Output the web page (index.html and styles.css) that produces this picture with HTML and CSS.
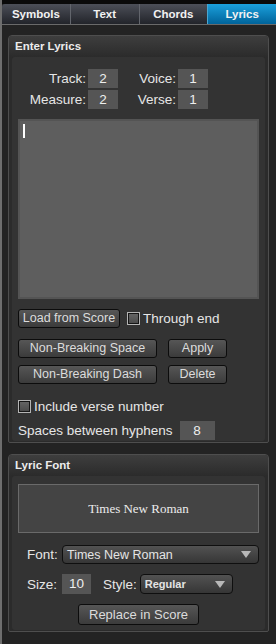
FILE: index.html
```html
<!DOCTYPE html>
<html>
<head>
    <title>Lyrics</title>
    <link rel="stylesheet" href="styles.css">
</head>
<body>
    <div class="topstrip"></div>
    <div class="tabs">
        <div class="tab">Symbols</div>
        <div class="tab">Text</div>
        <div class="tab">Chords</div>
        <div class="tab on">Lyrics</div>
    </div>

    <!-- Enter Lyrics -->
    <div class="group">
        <div class="group-title">Enter Lyrics</div>
        <div class="group-body">
            <div class="pos">
                <span class="lbl">Track:</span><span class="field">2</span>
                <span class="lbl">Voice:</span><span class="field">1</span>
                <span class="lbl">Measure:</span><span class="field">2</span>
                <span class="lbl">Verse:</span><span class="field">1</span>
            </div>
            <div class="lyrics-box"><span class="caret"></span></div>
            <div class="row row-load">
                <div class="btn w-load">Load from Score</div>
                <span class="check"></span><span class="txt">Through end</span>
            </div>
            <div class="row row-nbs">
                <div class="btn w-nb">Non-Breaking Space</div>
                <div class="btn w-ap">Apply</div>
            </div>
            <div class="row row-nbd">
                <div class="btn w-nb">Non-Breaking Dash</div>
                <div class="btn w-ap">Delete</div>
            </div>
            <div class="row row-inc">
                <span class="check first"></span><span class="txt">Include verse number</span>
            </div>
            <div class="row row-hyph">
                <span class="txt">Spaces between hyphens</span>
                <span class="field w-hyph">8</span>
            </div>
        </div>
    </div>

    <!-- Lyric Font -->
    <div class="group">
        <div class="group-title">Lyric Font</div>
        <div class="group-body body-font">
            <div class="preview">Times New Roman</div>
            <div class="row row-font">
                <span class="txt lbl-font">Font:</span>
                <div class="select w-font"><span>Times New Roman</span><i class="arrow"></i></div>
            </div>
            <div class="row row-size">
                <span class="txt lbl-font">Size:</span>
                <span class="field w-size">10</span>
                <span class="txt lbl-style">Style:</span>
                <div class="select w-style"><span class="bold">Regular</span><i class="arrow"></i></div>
            </div>
            <div class="row row-replace">
                <div class="btn w-rep">Replace in Score</div>
            </div>
        </div>
    </div>
</body>
</html>
```

FILE: styles.css
```css
*{margin:0;padding:0;box-sizing:border-box;}
body{width:276px;height:644px;overflow:hidden;background:#232323;border-left:2px solid #6e6e6e;
    font-family:"Liberation Sans",Arial,sans-serif;color:#e6e6e6;}

.topstrip{height:4px;background:#0a0a0a;}
.tabs{display:flex;height:21px;border-bottom:1px solid #6a6a6a;}
.tab{flex:1;text-align:center;font-size:11.5px;font-weight:bold;line-height:20px;color:#f2f2f2;
    background:linear-gradient(#4c4f58,#22242a);border-left:1px solid #62656c;}
.tab:first-child{border-left:none;border-radius:3px 0 0 0;}
.tab.on{background:linear-gradient(#1ba0dc,#00639a);border-left-color:#4aa6d0;}

.group{margin:10px 7px 0 6px;border:1px solid #4e4e4e;border-radius:4px 4px 2px 2px;background:#2b2b2b;padding:0 3px 1px;}
.group + .group{margin-top:11px;}
.group-title{height:21px;margin:0 -3px;padding-left:6px;font-size:11.5px;font-weight:bold;line-height:20px;
    color:#ececec;background:linear-gradient(#3e3e3e,#2b2b2b);border-radius:3px 3px 0 0;}
.group-body{background:#333;border-radius:3px;padding:12px 6px 1px;}
.body-font{padding:8px 6px 5px;}

.pos{display:grid;grid-template-columns:68px 30px 56px 30px;column-gap:2px;row-gap:2px;}
.lbl{text-align:right;font-size:13.5px;line-height:19px;}
.field{display:block;height:19px;background:#555;text-align:center;font-size:13.5px;line-height:19px;color:#eee;}

.lyrics-box{margin-top:10px;height:180px;background:#5e5e5e;border:2px solid #545454;padding:3px 0 0 3px;}
.caret{display:block;width:2px;height:14px;background:#fff;}

.row{display:flex;align-items:center;}
.row-load{margin-top:10px;}
.row-nbs{margin-top:11px;}
.row-nbd{margin-top:7px;}
.row-inc{margin-top:13px;}
.row-hyph{margin-top:5px;}
.row-font{margin-top:12px;padding-left:9px;}
.row-size{margin-top:10px;padding-left:9px;}
.row-replace{margin-top:10px;justify-content:center;}

.btn{height:19px;border:1px solid #0c0c0c;border-radius:3px;background:linear-gradient(#565656,#3b3b3b);
    color:#dcdcdc;font-size:12.5px;line-height:17px;text-align:center;white-space:nowrap;}
.w-load{width:102px;}
.w-nb{width:139px;}
.w-ap{width:59px;margin-left:11px;}
.w-rep{width:121px;height:21px;line-height:19px;font-size:13px;}

.txt{font-size:13.5px;line-height:19px;white-space:nowrap;}
.check{display:block;width:13px;height:13px;border:1px solid #b4b4b4;background:linear-gradient(#666,#4a4a4a);
    box-shadow:inset 0 0 0 1px #151515;margin:0 3px 0 7px;}
.check.first{margin-left:0;}

.w-hyph{width:35px;margin-left:7px;}

.preview{height:49px;background:#444;border:1px solid #6a6a6a;text-align:center;
    font-family:"Liberation Serif","Times New Roman",serif;font-size:13px;line-height:47px;color:#ececec;}

.lbl-font{width:35px;}
.select{height:19px;border:1px solid #0f0f0f;border-radius:4px;background:linear-gradient(#525252,#363636);
    display:flex;align-items:center;justify-content:space-between;padding-left:4px;font-size:12.5px;color:#e4e4e4;}
.w-font{width:197px;}
.w-size{width:29px;height:20px;line-height:20px;}
.lbl-style{margin-left:12px;}
.w-style{width:93px;height:20px;margin-left:3px;}
.bold{font-weight:bold;font-size:11px;}
.arrow{display:block;width:0;height:0;border-top:7px solid #b8b8b8;border-left:5px solid transparent;
    border-right:5px solid transparent;margin-right:7px;}
```
